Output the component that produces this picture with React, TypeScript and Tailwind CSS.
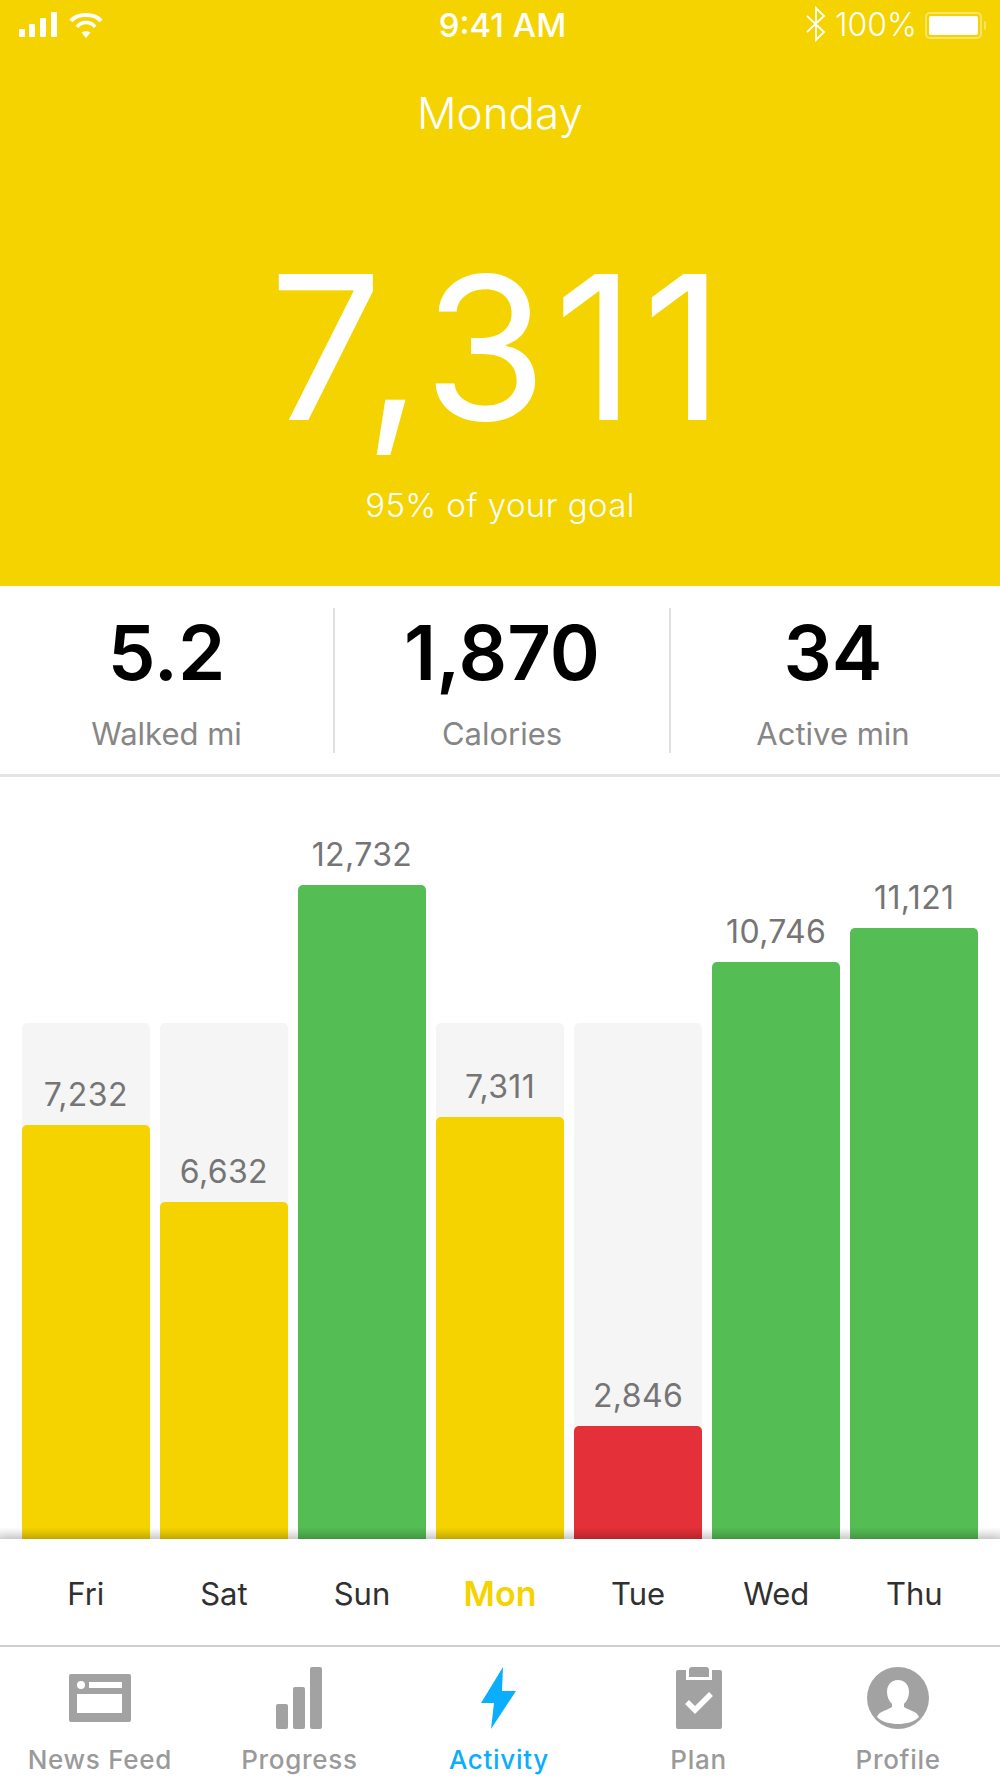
const font = "font-['Inter','Liberation_Sans',sans-serif]";

type Day = {
  day: string;
  steps: string;
  barH: string;
  color: string;
  track: boolean;
  active?: boolean;
};

const days: Day[] = [
  { day: "Fri", steps: "7,232", barH: "h-[414px]", color: "bg-[#f5d300]", track: true },
  { day: "Sat", steps: "6,632", barH: "h-[337px]", color: "bg-[#f5d300]", track: true },
  { day: "Sun", steps: "12,732", barH: "h-[654px]", color: "bg-[#54bd54]", track: false },
  { day: "Mon", steps: "7,311", barH: "h-[422px]", color: "bg-[#f5d300]", track: true, active: true },
  { day: "Tue", steps: "2,846", barH: "h-[113px]", color: "bg-[#e43038]", track: true },
  { day: "Wed", steps: "10,746", barH: "h-[577px]", color: "bg-[#54bd54]", track: false },
  { day: "Thu", steps: "11,121", barH: "h-[611px]", color: "bg-[#54bd54]", track: false },
];

function StatusBar() {
  return (
    <div className="flex h-[50px] items-center justify-between pl-[19px] pr-[14px] text-white">
      <div className="flex w-[200px] items-center gap-[12px]">
        <svg width="38" height="26" viewBox="0 0 38 26" fill="currentColor">
          <rect x="0" y="17" width="6" height="8" rx="1" />
          <rect x="10" y="12" width="6" height="13" rx="1" />
          <rect x="21" y="6" width="6" height="19" rx="1" />
          <rect x="32" y="0" width="6" height="25" rx="1" />
        </svg>
        <svg width="34" height="26" viewBox="0 0 34 26" fill="none" stroke="currentColor">
          <path d="M2 9C8 1 26 1 32 9" strokeWidth="4" />
          <path d="M8 15C12 9 22 9 26 15" strokeWidth="3.6" />
          <path d="M12.5 20.5a6 4 0 0 1 9 0L17 26z" fill="currentColor" stroke="none" />
        </svg>
      </div>
      <div className="text-[33px] font-medium leading-none">9:41 AM</div>
      <div className="flex w-[200px] items-center justify-end">
        <svg width="22" height="36" viewBox="0 0 22 36" fill="none" stroke="currentColor" strokeWidth="1.8" className="mt-[-3px]">
          <path d="M2 10l17 16-8 8V2l8 8L2 26" />
        </svg>
        <span className="ml-[8px] text-[32px] font-light leading-none">100%</span>
        <div className="ml-[8px] flex h-[27px] w-[57px] items-center rounded-[5px] border-[2px] border-white/40 p-[2px]">
          <div className="h-full w-full rounded-[2px] bg-white" />
        </div>
        <div className="ml-[2px] h-[9px] w-[2px] rounded-r bg-white/40" />
      </div>
    </div>
  );
}

function Stat({ value, label, w, border }: { value: string; label: string; w: string; border?: boolean }) {
  return (
    <div className={`flex h-[145px] flex-col items-center ${w} ${border ? "border-r-2 border-[#e0e0e0]" : ""}`}>
      <div className="mt-[6px] text-[76px] font-semibold leading-[76px] text-black">{value}</div>
      <div className="mt-[27px] text-[31px] leading-[34px] text-[#868686]">{label}</div>
    </div>
  );
}

function Tab({ label, active, children }: { label: string; active?: boolean; children: React.ReactNode }) {
  return (
    <div className="flex w-[200px] flex-col items-center">
      <div className="flex h-[62px] items-center justify-center">{children}</div>
      <div className={`mt-[16px] text-[26px] font-medium leading-[30px] tracking-[0.7px] ${active ? "text-[#0aaefc]" : "text-[#9a9a9a]"}`}>
        {label}
      </div>
    </div>
  );
}

export default function App() {
  return (
    <div className={`${font} flex h-[1778px] w-[1000px] flex-col overflow-hidden bg-white`}>
      <header className="flex h-[586px] shrink-0 flex-col items-center bg-[#f5d300] text-white">
        <div className="w-full">
          <StatusBar />
        </div>
        <div className="mt-[38px] text-[44px] font-light leading-[50px]">Monday</div>
        <div className="mt-[109px] text-[200px] font-normal leading-[200px] tracking-[7px]">7,311</div>
        <div className="mt-[38px] text-[33px] font-light leading-[40px] tracking-[0.4px]">95% of your goal</div>
      </header>

      <section className="flex h-[191px] shrink-0 items-start border-b-[3px] border-[#e4e4e4] pt-[22px]">
        <Stat value="5.2" label="Walked mi" w="w-[335px]" border />
        <Stat value="1,870" label="Calories" w="w-[336px]" border />
        <Stat value="34" label="Active min" w="flex-1 pr-[5px]" />
      </section>

      <section className="relative flex h-[762px] shrink-0 items-end gap-[10.5px] px-[22px]">
        {days.map((d) => (
          <div
            key={d.day}
            className={`flex flex-1 flex-col items-center justify-end rounded-t-[5px] ${d.track ? "h-[516px] bg-[#f5f5f5]" : ""}`}
          >
            <div className="mb-[13px] text-[32px] leading-[34px] tracking-[0.4px] text-[#757575]">{d.steps}</div>
            <div className={`w-full rounded-t-[5px] ${d.barH} ${d.color}`} />
          </div>
        ))}
        <div className="absolute inset-x-0 bottom-0 h-[12px] bg-gradient-to-b from-transparent to-black/12" />
      </section>

      <section className="relative z-10 flex h-[108px] shrink-0 items-center gap-[10.5px] border-b-2 border-[#cfcfcf] bg-white px-[22px] pt-[3px] shadow-[0_-1px_10px_rgba(0,0,0,0.18)]">
        {days.map((d) => (
          <div
            key={d.day}
            className={`flex-1 text-center leading-[34px] ${d.active ? "text-[34px] font-semibold text-[#f5d300]" : "text-[31px] text-[#303030]"}`}
          >
            {d.day}
          </div>
        ))}
      </section>

      <nav className="relative z-10 flex flex-1 items-start bg-white pr-[2px] pt-[20px]">
        <Tab label="News Feed">
          <svg width="62" height="48" viewBox="0 0 62 48" fill="#a2a2a2">
            <path fillRule="evenodd" d="M2 0h58a2 2 0 0 1 2 2v44a2 2 0 0 1-2 2H2a2 2 0 0 1-2-2V2a2 2 0 0 1 2-2zm6 20v19h45V20zM20 8v6h33V8zM12 7a4 4 0 1 0 0 8 4 4 0 0 0 0-8z" />
          </svg>
        </Tab>
        <Tab label="Progress">
          <svg width="46" height="62" viewBox="0 0 46 62" fill="#a2a2a2">
            <rect x="0" y="37" width="12" height="25" rx="2" />
            <rect x="17" y="20" width="12" height="42" rx="2" />
            <rect x="34" y="0" width="12" height="62" rx="2" />
          </svg>
        </Tab>
        <Tab label="Activity" active>
          <svg width="36" height="62" viewBox="0 0 36 62" fill="#0aaefc">
            <path d="M22 0L0 36h13L10 62 35 24H21z" />
          </svg>
        </Tab>
        <Tab label="Plan">
          <svg width="46" height="62" viewBox="0 0 46 62" fill="#a2a2a2">
            <path d="M2 3h8v10h26V3h8a2 2 0 0 1 2 2v55a2 2 0 0 1-2 2H2a2 2 0 0 1-2-2V5a2 2 0 0 1 2-2z" />
            <path d="M13 3q0-3 3-3h14q3 0 3 3v7H13z" />
            <path d="M11 35l8 8 16-16" fill="none" stroke="#fff" strokeWidth="5.5" />
          </svg>
        </Tab>
        <Tab label="Profile">
          <svg width="62" height="62" viewBox="0 0 62 62">
            <circle cx="31" cy="31" r="31" fill="#a2a2a2" />
            <path d="M31 13c-7 0-11 5-11 12 0 5 2 9 5 12v3c-4 3-13 4-15 10 5 5 13 7 21 7s16-2 21-7c-2-6-11-7-15-10v-3c3-3 5-7 5-12 0-7-4-12-11-12z" fill="#fff" />
          </svg>
        </Tab>
      </nav>
    </div>
  );
}
